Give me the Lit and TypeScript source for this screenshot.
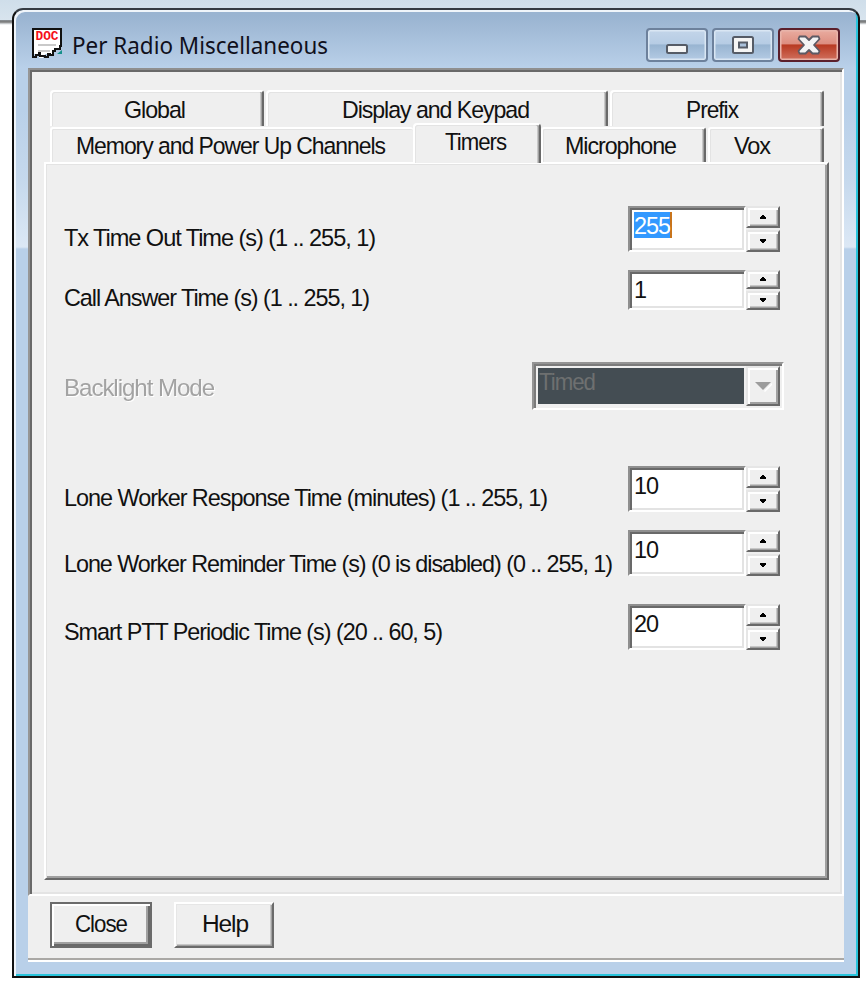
import { LitElement, html, css, svg } from "lit";
import { customElement, property } from "lit/decorators.js";

interface Row {
  label: string;
  width: number;
  value: string;
  valueWidth: number;
  gap: number;
  drop: number;
  height: number;
  kind?: "selected" | "combo";
}

const ROWS: Row[] = [
  { label: "Tx Time Out Time (s) (1 .. 255, 1)", width: 311, value: "255", valueWidth: 36, gap: 42, drop: 18, height: 46, kind: "selected" },
  { label: "Call Answer Time (s) (1 .. 255, 1)", width: 305, value: "1", valueWidth: 12, gap: 18, drop: 14, height: 40 },
  { label: "Backlight Mode", width: 150, value: "Timed", valueWidth: 56, gap: 52, drop: 12, height: 48, kind: "combo" },
  { label: "Lone Worker Response Time (minutes) (1 .. 255, 1)", width: 483, value: "10", valueWidth: 24, gap: 56, drop: 18, height: 46 },
  { label: "Lone Worker Reminder Time (s) (0 is disabled) (0 .. 255, 1)", width: 548, value: "10", valueWidth: 24, gap: 18, drop: 20, height: 46 },
  { label: "Smart PTT Periodic Time (s) (20 .. 60, 5)", width: 378, value: "20", valueWidth: 24, gap: 28, drop: 14, height: 46 },
];

/* One line of text condensed or widened to a set width. */
@customElement("fit-text")
export class FitText extends LitElement {
  @property() text = "";
  @property({ type: Number }) width = 0;
  static styles = css`
    :host { display: block; flex: none; }
    svg { display: block; overflow: visible; }
    text { fill: currentColor; white-space: pre; }
  `;
  render() {
    return html`<svg width=${this.width} height="30">
      ${svg`<text x="0" y="22" textLength=${this.width} lengthAdjust="spacingAndGlyphs">${this.text}</text>`}
    </svg>`;
  }
}

@customElement("spin-buttons")
export class SpinButtons extends LitElement {
  static styles = css`
    :host { display: flex; flex-direction: column; width: 34px; gap: 2px; }
    .b {
      flex: 1; display: flex; align-items: center; justify-content: center;
      box-sizing: border-box; background: #efefef;
      border: 2px solid; border-color: #e6e6e6 #696969 #696969 #e6e6e6;
      box-shadow: inset 2px 2px #fff, inset -1.5px -1.5px #a0a0a0;
    }
    svg { display: block; }
  `;
  render() {
    return html`
      <div class="b"><svg width="8" height="5"><path d="M3 0h2v1h1v1h1v2h-6v-2h1v-1h1z" /></svg></div>
      <div class="b"><svg width="8" height="5"><path d="M1 0h6v2h-1v1h-1v1h-2v-1h-1v-1h-1z" /></svg></div>
    `;
  }
}

@customElement("app-root")
export class AppRoot extends LitElement {
  static styles = css`
    :host {
      display: block; box-sizing: border-box; width: 866px; height: 986px;
      padding: 8px 6px 8px 12px; overflow: hidden;
      font: 24.5px "Liberation Sans", Arial, sans-serif; letter-spacing: -1.1px; color: #111;
      background: linear-gradient(#cfdeea, #d8e4ee 20px, #8c9298 20px, #777 22px, #dfe3e6 24px, #fff 25px);
    }
    .window {
      box-sizing: border-box; width: 848px; height: 970px;
      border: 2px solid #111; border-top-color: #353b42; border-radius: 11px 11px 0 0;
      padding: 0 14px 14px; display: flex; flex-direction: column;
      background: linear-gradient(#9ab4d1, #9ab4d1 6px, #b9d0e9 58px, #b9d0e9 100px, #c6d9ed 172px, #dce8f5 237px, #b9d0e9 239px);
      box-shadow: inset 2px 2px #f0f5fa, inset -2px -2px #28c4dc;
    }
    .title { height: 58px; flex: none; display: flex; align-items: flex-start; padding: 18px 4px 0; box-sizing: border-box; }
    .title fit-text { margin: 4px 0 0 9px; font: 24px "Noto Sans", "Open Sans", sans-serif; letter-spacing: 0; color: #10101c; }
    .icon-text { font: bold 12px "Liberation Mono", monospace; letter-spacing: 0; fill: #f5101a; }
    .controls { margin-left: auto; display: flex; gap: 4px; }
    .ctl {
      box-sizing: border-box; width: 62px; height: 34px; border-radius: 4px;
      border: 2px solid #6d819c; display: flex; align-items: center; justify-content: center;
      background: linear-gradient(#c3d5e9, #b6cce4 46%, #98b4d1 50%, #b4cbe4);
      box-shadow: inset 0 0 0 1.5px #d9e6f3;
    }
    .ctl.close {
      border-color: #5b1f2b; background: linear-gradient(#e9aca0, #dd8e80 46%, #b83a22 50%, #d0705e);
      box-shadow: inset 0 0 0 1.5px #e8b4aa;
    }
    .client { flex: 1; display: flex; flex-direction: column; background: #efefef; }
    .main {
      box-sizing: border-box; height: 828px; flex: none; padding: 20px 13px 0 14px;
      border: 2px solid; border-color: #8f8f8f #fff #fff #969696;
      box-shadow: inset 2px 2px #696969, inset -2px -2px #e4e4e4;
    }
    .tabs { display: flex; gap: 2px; height: 37px; margin: 0 4px 0 6px; }
    .tabs.front { height: 35px; gap: 0; }
    .tab {
      box-sizing: border-box; height: 36px; border-top: 2px solid #fff; border-left: 2px solid #fff;
      border-right: 2px solid #696969; border-radius: 4px 3px 0 0; padding-top: 4px;
      box-shadow: inset -1.5px 0 #a0a0a0, inset 1px 1px #e3e3e3; background: #efefef;
    }
    .global { width: 214px; padding-left: 72px; }
    .display { width: 342px; padding-left: 74px; }
    .prefix { width: 214px; padding-left: 74px; }
    .front .tab { height: 35px; padding-top: 3px; border-radius: 3px 3px 0 0; }
    .front .tab.memory { width: 363px; padding-left: 24px; border-right: 0; box-shadow: inset 1px 1px #e3e3e3; }
    .front .tab.timers {
      width: 128px; padding-left: 30px; height: 43px; margin-top: -4px; padding-top: 3px;
      position: relative; z-index: 1; border-radius: 4px 4px 0 0; clip-path: inset(0 0 3px 0);
    }
    .micro { width: 165px; padding-left: 22px; }
    .front .tab.vox { margin-left: 2px; width: 116px; padding-left: 24px; }
    .page {
      box-sizing: border-box; height: 718px; width: 785px;
      border: 2px solid #fff; border-right-color: #696969; border-bottom-color: #696969;
      box-shadow: inset 1px 1px #e3e3e3, inset -2px -2px #a0a0a0; padding-left: 18px;
    }
    .row { display: flex; width: 716px; align-items: flex-start; }
    .disabled > fit-text { color: #a3a3a3; filter: drop-shadow(1.5px 1.5px 0 #fff); }
    .field {
      box-sizing: border-box; width: 118px; height: 100%; margin-left: auto; background: #fff;
      border: 2px solid; border-color: #8f8f8f #fff #fff #8f8f8f;
      box-shadow: inset 2px 2px #696969, inset -2px -2px #e3e3e3; padding: 4px 0 0 4px;
    }
    .sel { width: 36px; height: 26px; background: #3399ff; color: #fff; border-right: 2px solid #c8741c; }
    .combo {
      box-sizing: border-box; width: 252px; height: 48px; margin: 0 -4px 0 auto; display: flex;
      border: 2px solid; border-color: #949494 #fff #fff #949494; background: #efefef;
      box-shadow: inset 2px 2px #7b7b7b;
    }
    .shade { width: 206px; height: 36px; margin: 4px 2px 0 4px; background: #444d53; color: #6e7070; }
    .shade fit-text { margin: 0 0 0 1px; }
    .drop {
      box-sizing: border-box; width: 34px; height: 40px; margin-top: 2px; display: flex; align-items: center; justify-content: center;
      border: 2px solid; border-color: #e6e6e6 #696969 #696969 #e6e6e6;
      box-shadow: inset 2px 2px #fff, inset -2px -2px #a0a0a0;
    }
    .foot { flex: 1; display: flex; align-items: flex-start; padding: 6px 22px 0; gap: 22px; box-sizing: border-box;
      border-bottom: 2px solid #fff; box-shadow: inset 0 -2px #aaa8a5; }
    .btn {
      box-sizing: border-box; width: 100px; height: 46px; border: 2px solid;
      border-color: #fff #6b6b6b #6b6b6b #fff; box-shadow: inset 1px 1px #e6e6e6, inset -1.5px -1.5px #a0a0a0; padding: 6px 0 0 26px;
    }
    .btn.default {
      width: 102px; border-color: #6b6b6b; padding-left: 23px;
      box-shadow: inset 2px 2px #fff, inset -2px -2px #696969, inset -4px -4px #a0a0a0;
    }
  `;

  private control(r: Row) {
    if (r.kind === "combo") {
      return html`<div class="combo">
        <div class="shade"><fit-text .text=${r.value} .width=${r.valueWidth}></fit-text></div>
        <div class="drop"><svg width="18" height="11"><path d="M10 10l8-8v2l-7 7z" fill="#fff" /><path d="M1 1h16l-8 8z" fill="#9c9c9c" /></svg></div>
      </div>`;
    }
    const text = html`<fit-text .text=${r.value} .width=${r.valueWidth}></fit-text>`;
    return html`<div class="field"><div class=${r.kind === "selected" ? "sel" : "plain"}>${text}</div></div>
      <spin-buttons style="height:${r.height}px"></spin-buttons>`;
  }

  private tab(cls: string, text: string, width: number) {
    return html`<div class="tab ${cls}"><fit-text .text=${text} .width=${width}></fit-text></div>`;
  }

  render() {
    return html`<div class="window">
      <div class="title">
        <svg width="31" height="31" viewBox="0 0 31 31">
          <path d="M1 1h28v17h-2v3h-3v2h-3v3h-3v2h-2v-2h-3v2h-2v2h-4v-2h-3v-2h-3v2h-2z" fill="#fff" />
          <path d="M1 0v29h3v-2h3v-2h1v3h5v1h3v-3h2v1h3v-4h2v-2h5v-3h1V1H1" fill="none" stroke="#111" stroke-width="2" />
          <text class="icon-text" x="3.500" y="12" textLength="23" lengthAdjust="spacingAndGlyphs">DOC</text>
          <path d="M6 17h18M6 23h12" stroke="#c9c9c9" stroke-width="1.800" />
          <path d="M30 22v4h-5z" fill="#15908a" />
        </svg>
        <fit-text .text=${"Per Radio Miscellaneous"} .width=${256}></fit-text>
        <div class="controls">
          <div class="ctl"><svg width="24" height="22"><rect x="2" y="11" width="20" height="8" rx="1.500" fill="#f4f4f4" stroke="#555b66" stroke-width="2" /></svg></div>
          <div class="ctl"><svg width="24" height="22"><rect x="2" y="3" width="20" height="16" rx="1.500" fill="#f4f4f4" stroke="#555b66" stroke-width="2" /><rect x="8" y="8.500" width="8" height="5" fill="#a9c0da" stroke="#555b66" stroke-width="2" /></svg></div>
          <div class="ctl close"><svg width="24" height="22"><path d="M2.500 2.500h6l3.500 3.500 3.500-3.500h6l1 2.500-5.500 6 5.500 6-1 2.500h-6l-3.500-3.500-3.500 3.500h-6l-1-2.500 5.500-6-5.500-6z" fill="#f4f4f4" stroke="#5d5a64" stroke-width="1.800" stroke-linejoin="round" /></svg></div>
        </div>
      </div>
      <div class="client">
        <div class="main">
          <div class="tabs">
            ${this.tab("global", "Global", 61)}
            ${this.tab("display", "Display and Keypad", 187)}
            ${this.tab("prefix", "Prefix", 52)}
          </div>
          <div class="tabs front">
            ${this.tab("memory", "Memory and Power Up Channels", 309)}
            ${this.tab("timers", "Timers", 61)}
            ${this.tab("micro", "Microphone", 111)}
            ${this.tab("vox", "Vox", 36)}
          </div>
          <div class="page">
            ${ROWS.map((r) => html`<div class="row ${r.kind === "combo" ? "disabled" : ""}" style="height:${r.height}px;padding-top:${r.gap}px">
              <fit-text style="margin-top:${r.drop}px" .text=${r.label} .width=${r.width}></fit-text>
              ${this.control(r)}
            </div>`)}
          </div>
        </div>
        <div class="foot">
          <div class="btn default"><fit-text .text=${"Close"} .width=${52}></fit-text></div>
          <div class="btn"><fit-text .text=${"Help"} .width=${46}></fit-text></div>
        </div>
      </div>
    </div>`;
  }
}
